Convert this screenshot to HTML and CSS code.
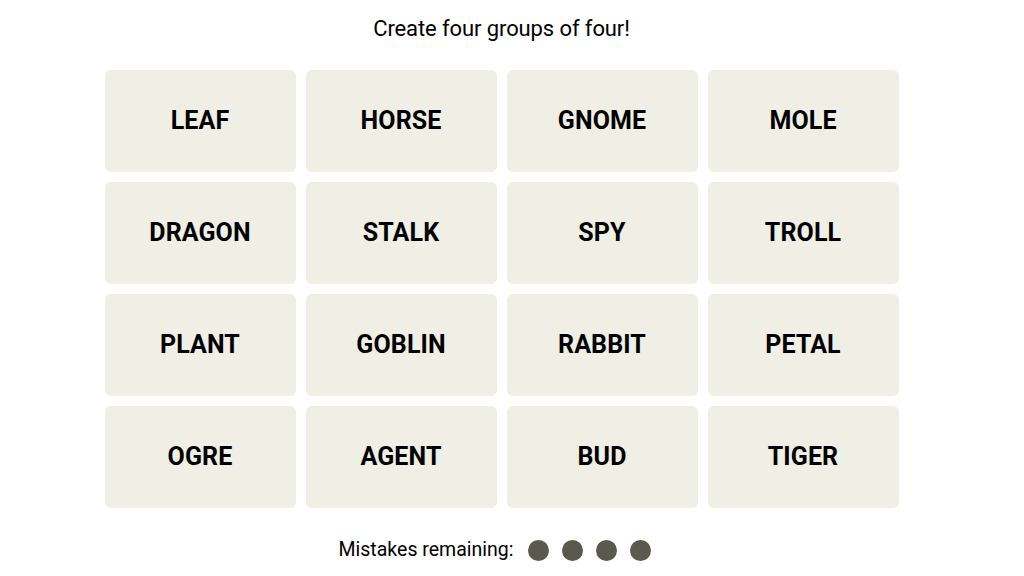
FILE: index.html
```html
<!DOCTYPE html>
<html>
<head>
<meta charset="utf-8">
<link rel="stylesheet" href="styles.css">
</head>
<body>
<main class="page">
  <h1 class="title">Create four groups of four!</h1>
  <div class="board">
    <div class="tile">LEAF</div>
    <div class="tile">HORSE</div>
    <div class="tile">GNOME</div>
    <div class="tile">MOLE</div>
    <div class="tile">DRAGON</div>
    <div class="tile">STALK</div>
    <div class="tile">SPY</div>
    <div class="tile">TROLL</div>
    <div class="tile">PLANT</div>
    <div class="tile">GOBLIN</div>
    <div class="tile">RABBIT</div>
    <div class="tile">PETAL</div>
    <div class="tile">OGRE</div>
    <div class="tile">AGENT</div>
    <div class="tile">BUD</div>
    <div class="tile">TIGER</div>
  </div>
  <div class="mistakes">
    <span class="mistakes-label">Mistakes remaining:</span>
    <span class="dots">
      <span class="dot"></span><span class="dot"></span><span class="dot"></span><span class="dot"></span>
    </span>
  </div>
</main>
</body>
</html>
```
FILE: styles.css
```css
html, body {
  margin: 0;
  padding: 0;
  background: #ffffff;
}
.page {
  width: 1003px;
  display: flex;
  flex-direction: column;
  align-items: center;
  font-family: Roboto, "Liberation Sans", sans-serif;
  color: #000;
}
.title {
  margin: 16px 0 0;
  font-size: 22px;
  font-weight: 400;
  line-height: 26px;
  letter-spacing: -0.1px;
}
.board {
  margin-top: 28px;
  display: grid;
  grid-template-columns: repeat(4, 191px);
  grid-auto-rows: 102px;
  gap: 10px;
}
.tile {
  background: #efefe6;
  border-radius: 6px;
  display: flex;
  align-items: center;
  justify-content: center;
  font-weight: 700;
  font-size: 25px;
  letter-spacing: 0.1px;
  padding-bottom: 2px;
}
.mistakes {
  margin-top: 30px;
  padding-right: 13px;
  display: flex;
  align-items: center;
  gap: 15px;
}
.mistakes-label {
  font-size: 19.5px;
  line-height: 24px;
}
.dots {
  display: flex;
  gap: 13px;
}
.dot {
  width: 21px;
  height: 21px;
  border-radius: 50%;
  background: #5a594e;
}
```
